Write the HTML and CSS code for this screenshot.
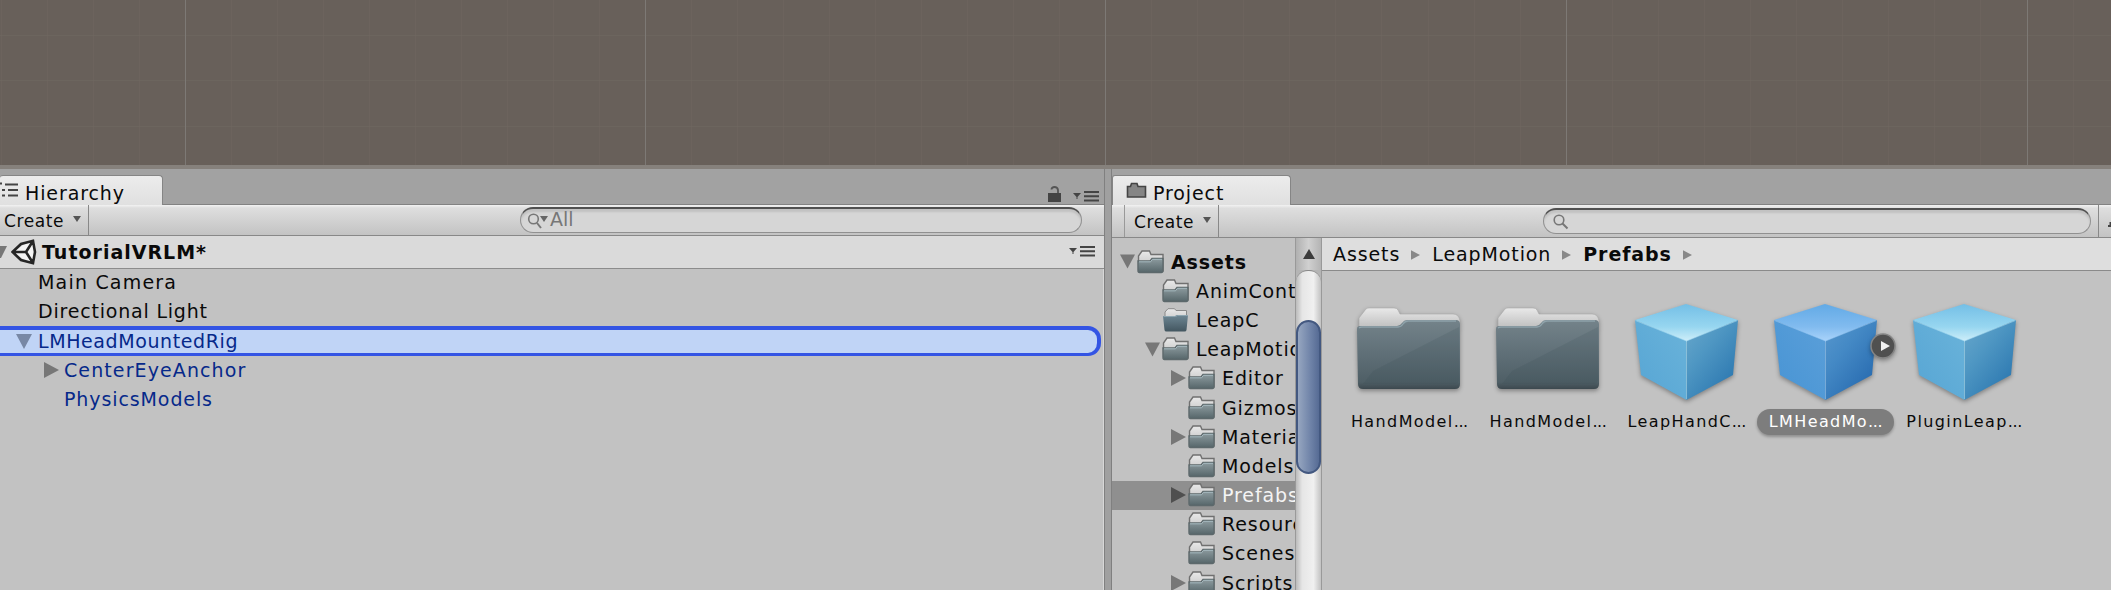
FILE: index.html
```html
<!DOCTYPE html>
<html lang="en">
<head>
<meta charset="utf-8">
<title>Editor</title>
<link rel="stylesheet" href="styles.css">
</head>
<body>
<svg class="defs" aria-hidden="true">
  <defs>
    <linearGradient id="fback" x1="0" y1="0" x2="0" y2="1"><stop offset="0" stop-color="#e9e9e9"/><stop offset="1" stop-color="#bcbcbc"/></linearGradient>
    <linearGradient id="ffront" x1="0" y1="0" x2="0" y2="1"><stop offset="0" stop-color="#74838a"/><stop offset=".5" stop-color="#5f6f77"/><stop offset=".9" stop-color="#4f5f66"/><stop offset="1" stop-color="#3c484e"/></linearGradient>
    <linearGradient id="fsmall" x1="0" y1="0" x2="0" y2="1"><stop offset="0" stop-color="#8d9b9f"/><stop offset="1" stop-color="#56666a"/></linearGradient>
    <linearGradient id="fopen" x1="0" y1="0" x2="0" y2="1"><stop offset="0" stop-color="#6e8794"/><stop offset="1" stop-color="#435660"/></linearGradient>
    <linearGradient id="ctop" x1="0" y1="0" x2="0" y2="1"><stop offset="0" stop-color="#74bfe6"/><stop offset=".6" stop-color="#97d6f0"/><stop offset="1" stop-color="#d2f0fa"/></linearGradient>
    <linearGradient id="cleft" x1="0" y1="1" x2="1" y2="0"><stop offset="0" stop-color="#56a5d4"/><stop offset="1" stop-color="#6ab3da"/></linearGradient>
    <linearGradient id="cright" x1="0" y1="0" x2=".8" y2="1"><stop offset="0" stop-color="#69a8cc"/><stop offset=".4" stop-color="#4f97c3"/><stop offset="1" stop-color="#2874ae"/></linearGradient>
    <linearGradient id="stop" x1="0" y1="0" x2="0" y2="1"><stop offset="0" stop-color="#62aae6"/><stop offset=".6" stop-color="#81bbef"/><stop offset="1" stop-color="#add5fb"/></linearGradient>
    <linearGradient id="sleft" x1="0" y1="1" x2="1" y2="0"><stop offset="0" stop-color="#4794d4"/><stop offset="1" stop-color="#5b9fd9"/></linearGradient>
    <linearGradient id="sright" x1="0" y1="0" x2=".8" y2="1"><stop offset="0" stop-color="#5898ce"/><stop offset=".4" stop-color="#4489c5"/><stop offset="1" stop-color="#2467ad"/></linearGradient>
    <symbol id="folder" viewBox="0 0 27 24">
      <path d="M1.500 20V6L5 1h7.500l1.500 3.500h12V21H2z" fill="url(#fback)" stroke="#707070" stroke-width="1.400"/>
      <path d="M1 11h12l2-2.500h11V21q0 1.500-1.500 1.500h-22Q1 22.500 1 21z" fill="url(#fsmall)" stroke="#5c686b" stroke-width="1.300"/>
      <path d="M2 11.800h11.500l2-2.500H25" fill="none" stroke="#a9bcc2"/>
    </symbol>
    <symbol id="folder-open" viewBox="0 0 27 24">
      <path d="M3 18V4L6 .7h6.500L14 2.500h10.500V18z" fill="url(#fback)" stroke="#8a8a8a"/>
      <path d="M1 8h12l2-1h11l-1.500 15q-.2 1.500-2 1.500h-18q-1.800 0-2-1.500z" fill="url(#fopen)"/>
      <path d="M1.500 8.500h12l2-1h10.500" fill="none" stroke="#8ca4af"/>
    </symbol>
    <symbol id="bigfolder" viewBox="0 0 104 84">
      <path d="M2 20V11L9 2q1-1 3-1h25q3 0 4 2l2 4h53q6 0 7 7v8z" fill="url(#fback)" stroke="#aaa" stroke-width=".6"/>
      <path d="M0 22q0-3 3-3h37q3 0 5-3t5-3h49q4 0 4 4v60q0 5-5 5H6q-5 0-5-5z" fill="url(#ffront)"/>
      <path d="M2 21q1-1 3-1h36q3 0 5-3t5-3h48" fill="none" stroke="#8fa3ab" stroke-width="1.300"/>
      <path d="M16 64 102 20v52q0 5-5 5H6z" fill="#34454d" opacity=".14"/>
    </symbol>
    <symbol id="cube" viewBox="0 0 103 96">
      <path d="M0 16 51 0l52 16-52 22z" fill="url(#ctop)"/><path d="M0 16 51.500 37v59L6 71z" fill="url(#cleft)"/><path d="M103 16 51.500 37v59L98 71z" fill="url(#cright)"/><path d="M.5 16.500 51.500 37l51-20.500M51.500 37v58" fill="none" stroke="#a8dcf3" stroke-opacity=".55"/>
    </symbol>
    <symbol id="cube-sel" viewBox="0 0 103 96">
      <path d="M0 16 51 0l52 16-52 22z" fill="url(#stop)"/><path d="M0 16 51.500 37v59L6 71z" fill="url(#sleft)"/><path d="M103 16 51.500 37v59L98 71z" fill="url(#sright)"/><path d="M.5 16.500 51.500 37l51-20.500M51.500 37v58" fill="none" stroke="#9cccf8" stroke-opacity=".5"/>
    </symbol>
    <symbol id="down" viewBox="0 0 16 15"><path d="M0 0h16L8 15z"/></symbol>
    <symbol id="right" viewBox="0 0 15 16"><path d="M0 0v16l15-8z"/></symbol>
    <symbol id="menu" viewBox="0 0 26 12"><path d="M0 3h8L4.500 7v2h-1V7zM11 1h15v2H11zM11 5.200h15v2H11zM11 9.500h15v2H11z" fill="#444"/></symbol>
  </defs>
</svg>
<div class="editor">
  <div class="scene">
    <svg width="2111" height="165">
      <g stroke="#706962" stroke-opacity=".55"><path d="M0 35.500h2111M0 80.500h2111M0 126.500h2111"/></g>
      <path d="M1.500 0v165M47.500 0v165M93.500 0v165M139.500 0v165M231.500 0v165M277.500 0v165M323.500 0v165M369.500 0v165M415.500 0v165M461.500 0v165M507.500 0v165M553.500 0v165M599.500 0v165M691.500 0v165M737.500 0v165M783.500 0v165M829.500 0v165M875.500 0v165M921.500 0v165M967.500 0v165M1013.500 0v165M1059.500 0v165M1151.500 0v165M1197.500 0v165M1243.500 0v165M1289.500 0v165M1335.500 0v165M1381.500 0v165M1428.500 0v165M1474.500 0v165M1520.500 0v165M1612.500 0v165M1658.500 0v165M1704.500 0v165M1750.500 0v165M1796.500 0v165M1842.500 0v165M1888.500 0v165M1934.500 0v165M1980.500 0v165M2073.500 0v165" stroke="#706962" stroke-opacity=".45"/>
      <path d="M185.500 0v165M645.500 0v165M1105.500 0v165M1566.500 0v165M2027.500 0v165" stroke="#7d7975"/>
    </svg>
  </div>
  <div class="docks">
    <section class="panel hierarchy">
      <header class="tabs">
        <div class="tab">
          <svg width="19" height="16"><path d="M0 1.500h2M5 2.500h13M8 8h10M8 13.500h10M2 8h3M2 13.500h3" stroke="#444" stroke-width="2"/></svg>
          <span>Hierarchy</span>
        </div>
        <div class="tools">
          <svg width="13" height="18" viewBox="0 0 13 18"><path d="M0 8h13v9H0z" fill="#444"/><path d="M3.500 4.500Q3.500 2 6.500 2t3.500 3V8" fill="none" stroke="#555" stroke-width="1.800"/></svg>
          <svg width="26" height="12"><use href="#menu"/></svg>
        </div>
      </header>
      <div class="toolbar">
        <div class="create">Create<svg width="8" height="6"><path d="M0 0h8L4 6z" fill="#555"/></svg></div>
        <div class="search"><svg width="22" height="16"><circle cx="6.500" cy="6" r="4.800" fill="none" stroke="#777" stroke-width="1.600"/><path d="m10 10 4 5" stroke="#777" stroke-width="2"/><path d="M13 3h8l-4 6z" fill="#666"/></svg><span>All</span></div>
      </div>
      <div class="scene-row">
        <svg class="edge" width="7" height="12"><path d="M0 0h7L1 12H0z" fill="#777"/></svg>
        <svg class="unity" width="26" height="26" viewBox="0 0 26 26"><path d="M2 13 18 2l5.500 1L25 13l-1.500 10L18 24z" fill="#f4f4f4"/><path d="M1.500 13 10 5 22 1.800 24 13 22 24.200 10 21zM2 13h13M15 13l7-11M15 13l7 11" fill="none" stroke="#262626" stroke-width="2.600"/></svg>
        <b>TutorialVRLM*</b>
        <svg class="menu" width="26" height="12"><use href="#menu"/></svg>
      </div>
      <ul class="objects">
        <li class="camera">Main Camera</li>
        <li class="light">Directional Light</li>
        <li class="picked"><svg width="16" height="15"><use href="#down"/></svg>LMHeadMountedRig</li>
        <li class="child prefab anchor"><svg width="15" height="16"><use href="#right"/></svg>CenterEyeAnchor</li>
        <li class="child prefab">PhysicsModels</li>
      </ul>
    </section>
    <section class="panel project">
      <header class="tabs">
        <div class="tab">
          <svg width="21" height="17"><path d="M1.500 15V4.500h3l1-3H11l1 3h7.500V15z" fill="#858585" stroke="#444" stroke-width="1.600"/></svg>
          <span>Project</span>
        </div>
      </header>
      <div class="toolbar">
        <div class="create">Create<svg width="8" height="6"><path d="M0 0h8L4 6z" fill="#555"/></svg></div>
        <div class="search"><svg width="16" height="16"><circle cx="6" cy="6" r="4.800" fill="none" stroke="#777" stroke-width="1.600"/><path d="m9.500 9.500 5 5" stroke="#777" stroke-width="2"/></svg></div>
        <div class="filter"><svg width="12" height="12"><path d="M9 7h3v2H9zM10.500 4H12v3h-1.500z" fill="#444"/></svg></div>
      </div>
      <div class="browser">
        <ul class="tree">
          <li class="d0"><svg class="tw" width="15" height="15"><use href="#down"/></svg><svg width="27" height="24"><use href="#folder"/></svg><b>Assets</b></li>
          <li class="d1"><i class="tw"></i><svg width="27" height="24"><use href="#folder"/></svg><span>AnimControllers</span></li>
          <li class="d1"><i class="tw"></i><svg width="27" height="24"><use href="#folder-open"/></svg><span>LeapC</span></li>
          <li class="d1"><svg class="tw" width="15" height="15"><use href="#down"/></svg><svg width="27" height="24"><use href="#folder"/></svg><span>LeapMotion</span></li>
          <li class="d2"><svg class="tw" width="15" height="16"><use href="#right"/></svg><svg width="27" height="24"><use href="#folder"/></svg><span>Editor</span></li>
          <li class="d2"><i class="tw"></i><svg width="27" height="24"><use href="#folder"/></svg><span>Gizmos</span></li>
          <li class="d2"><svg class="tw" width="15" height="16"><use href="#right"/></svg><svg width="27" height="24"><use href="#folder"/></svg><span>Materials</span></li>
          <li class="d2"><i class="tw"></i><svg width="27" height="24"><use href="#folder"/></svg><span>Models</span></li>
          <li class="d2 current"><svg class="tw" width="15" height="16"><use href="#right"/></svg><svg width="27" height="24"><use href="#folder"/></svg><span>Prefabs</span></li>
          <li class="d2"><i class="tw"></i><svg width="27" height="24"><use href="#folder"/></svg><span>Resources</span></li>
          <li class="d2"><i class="tw"></i><svg width="27" height="24"><use href="#folder"/></svg><span>Scenes</span></li>
          <li class="d2"><svg class="tw" width="15" height="16"><use href="#right"/></svg><svg width="27" height="24"><use href="#folder"/></svg><span>Scripts</span></li>
        </ul>
        <div class="scroll">
          <div class="up"><svg width="12" height="10"><path d="M0 10h12L6 0z" fill="#3c3c3c"/></svg></div>
          <div class="track"><div class="thumb"></div></div>
        </div>
        <div class="files">
          <nav class="crumbs"><span>Assets</span><svg width="9" height="10"><use href="#right"/></svg><span>LeapMotion</span><svg width="9" height="10"><use href="#right"/></svg><b>Prefabs</b><svg width="9" height="10"><use href="#right"/></svg></nav>
          <div class="grid">
            <figure><svg class="fold" width="104" height="84"><use href="#bigfolder"/></svg><figcaption>HandModel<span>...</span></figcaption></figure>
            <figure><svg class="fold" width="104" height="84"><use href="#bigfolder"/></svg><figcaption>HandModel<span>...</span></figcaption></figure>
            <figure><svg width="103" height="96"><use href="#cube"/></svg><figcaption>LeapHandC<span>...</span></figcaption></figure>
            <figure class="active"><svg width="103" height="96"><use href="#cube-sel"/></svg><svg class="badge" width="26" height="26" viewBox="0 0 26 26"><circle cx="13" cy="13" r="12" fill="#505050" stroke="#858585" stroke-width="1.500"/><path d="M11 8v10l9-5z" fill="#f0f0f0"/></svg><figcaption>LMHeadMo<span>...</span></figcaption></figure>
            <figure><svg width="103" height="96"><use href="#cube"/></svg><figcaption>PluginLeap<span>...</span></figcaption></figure>
          </div>
        </div>
      </div>
    </section>
  </div>
</div>
</body>
</html>
```

FILE: styles.css
```css
* { box-sizing: border-box; }
body { margin: 0; background: #a2a2a2; color: #0a0a0a; font: 19px/29px "DejaVu Sans", Verdana, sans-serif; letter-spacing: .9px; white-space: nowrap; }
ul, figure { list-style: none; margin: 0; padding: 0; }
svg { display: block; flex: none; }
.defs { position: absolute; width: 0; height: 0; }
.editor { width: 2111px; height: 590px; overflow: hidden; display: flex; flex-direction: column; }
.scene { height: 169px; background: #68605a; border-bottom: 4px solid #86817c; flex: none; overflow: hidden; }
.docks { flex: 1; display: flex; gap: 7px; min-height: 0; background: #a0a0a0; }
.panel { display: flex; flex-direction: column; min-width: 0; }
.hierarchy { width: 1105px; border-right: 1px solid #808080; }
.project { flex: 1; box-shadow: -1px 0 #808080; }
.tabs { height: 36px; flex: none; display: flex; justify-content: space-between; align-items: flex-end; background: #a2a2a2; border-bottom: 1px solid #828282; }
.tab { height: 30px; margin-bottom: -1px; display: flex; align-items: center; background: linear-gradient(#ececec, #e0e0e0); border: 1px solid #858585; border-bottom: 0; border-radius: 3px 4px 0 0; }
.hierarchy .tab { width: 163px; border-left: 0; gap: 6px; }
.hierarchy .tab svg { margin-top: -2px; }
.hierarchy .tab span, .project .tab span { padding-top: 5px; }
.project .tab { width: 179px; padding-left: 13px; gap: 6px; }
.tools { display: flex; align-items: flex-end; gap: 12px; padding: 0 5px 2px 0; }
.tools svg:first-child { margin-bottom: -1px; }
.toolbar { height: 31px; flex: none; display: flex; background: linear-gradient(#f2f2f2, #dedede 10%, #c3c3c3); border-bottom: 1px solid #888; }
.project .toolbar { height: 33px; padding-left: 12px; }
.create { display: flex; align-items: center; justify-content: space-between; width: 89px; padding: 2px 7px 0 4px; font-size: 17px; letter-spacing: .6px; border-right: 1px solid #888; }
.create svg { margin-top: -5px; }
.project .create { width: 95px; padding-left: 9px; border-left: 1px solid #999; }
.search { display: flex; align-items: center; height: 26px; margin: 2px 0 0 431px; width: 562px; padding-left: 6px; border: 1.5px solid #909090; border-top: 2px solid #505050; border-radius: 13px; background: #d6d6d6; box-shadow: inset 0 3px 2px #c2c2c2; color: #777; font-size: 19px; }
.search span { letter-spacing: 0; margin: -4px 0 0 1px; line-height: 22px; }
.project .search { margin: 3px 0 0 324px; width: 548px; padding-left: 9px; }
.filter { margin-left: 7px; border-left: 1px solid #888; flex: 1; padding: 13px 0 0; overflow: hidden; }
.scene-row { height: 33px; flex: none; display: flex; align-items: center; background: #dadada; border-bottom: 1px solid #8c8c8c; }
.scene-row b { margin-left: 5px; letter-spacing: 1px; padding-top: 1px; }
.unity { margin-left: 4px; }
.menu { margin-left: auto; margin-right: 9px; margin-top: -2px; }
.objects { flex: 1; background: #c2c2c2; border-right: 1px solid #d8d8d8; }
.objects li { height: 29.2px; padding-left: 38px; display: flex; align-items: center; }
.objects li:first-child { margin-top: -1px; }
.objects .camera { letter-spacing: 1.2px; }
.objects .light { letter-spacing: .8px; }
.objects .child { padding-left: 64px; }
.objects .anchor { letter-spacing: 1.1px; }
.objects svg { fill: #777; margin-left: -22px; margin-right: 6px; }
.objects .child svg { margin-left: -20px; margin-right: 5px; }
.prefab, .objects .picked { color: #06298a; }
.objects .picked { width: 1101px; letter-spacing: .6px; background: #c0d4f6; border: 4px solid #3354e4; border-left: 0; border-radius: 0 13px 13px 0; border-bottom-width: 3.500px; }
.picked svg { fill: #7888a5; }
.browser { display: flex; flex: 1; min-height: 0; background: #c2c2c2; }
.tree { width: 183px; padding-top: 9px; overflow: hidden; }
.tree li { height: 29.2px; display: flex; align-items: center; }
.tree .d0 { padding-left: 8px; }
.tree .d1 { padding-left: 33px; }
.tree .d2 { padding-left: 59px; }
.tree .tw { width: 15px; margin-right: 2px; fill: #777; flex: none; }
.tree span, .tree b { margin-left: 7px; padding-top: 1px; }
.current { background: #8f8f8f; color: #f4f4f4; }
.tree .current .tw { fill: #4f4f4f; }
.scroll { width: 27px; display: flex; flex-direction: column; border: 1px solid #999; border-width: 0 1px; background: #b4b4b4; }
.up { height: 32px; display: flex; justify-content: center; align-items: center; background: linear-gradient(90deg, #b0b0b0, #d0d0d0, #b4b4b4); flex: none; }
.track { flex: 1; padding-top: 49px; border-radius: 12px 12px 0 0; background: linear-gradient(90deg, #bbb, #e6e6e6 25%, #f0f0f0 70%, #c2c2c2); border-top: 1px solid #888; }
.thumb { height: 154px; border: 2px solid #435880; border-radius: 13px; background: linear-gradient(90deg, #96a6c0, #6f83a8 60%, #566b94); }
.files { flex: 1; min-width: 0; }
.crumbs { height: 33px; display: flex; align-items: center; padding: 1px 0 0 11px; background: #dedede; border-bottom: 1px solid #8a8a8a; }
.crumbs svg { fill: #888; margin: 0 12px 0 11px; }
.grid { display: flex; padding: 33px 0 0 18px; }
.grid figure { width: 138.700px; display: flex; flex-direction: column; align-items: center; position: relative; }
.grid figure > svg { margin-bottom: 9px; filter: drop-shadow(0 2px 2px #0005); }
.grid figure > .fold { margin: 3px 0 18px; }
figcaption { font-size: 16px; line-height: 26px; height: 26px; letter-spacing: 1.4px; padding: 0 12px; border-radius: 13px; }
figcaption span { letter-spacing: -.4px; }
.active figcaption { background: #7d7d7d; color: #fff; box-shadow: 0 2px 3px #0004; }
.grid .badge { position: absolute; left: 114px; top: 29px; margin: 0; }
```
